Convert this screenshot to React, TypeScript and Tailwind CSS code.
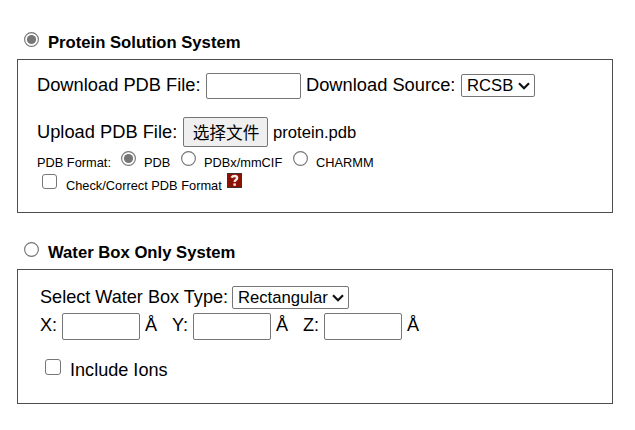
import type { ReactNode } from "react";

function Radio({ checked = false, className = "" }: { checked?: boolean; className?: string }) {
  return (
    <svg viewBox="0 0 15 15" className={`h-[15px] w-[15px] shrink-0 ${className}`}>
      <circle cx="7.5" cy="7.5" r="6.9" fill="white" stroke="#767676" strokeWidth="1.15" />
      {checked && <circle cx="7.5" cy="7.5" r="4.6" fill="#767676" />}
    </svg>
  );
}

function Text({ children, className = "" }: { children: ReactNode; className?: string }) {
  return <span className={`block shrink-0 leading-5 whitespace-nowrap ${className}`}>{children}</span>;
}

function Select({ value, className = "" }: { value: string; className?: string }) {
  return (
    <div className={`flex h-[23px] shrink-0 justify-between rounded-[2px] border border-[#767676] bg-white pr-[4px] pl-[5px] ${className}`}>
      <span className="text-[16.67px] leading-[21px]">{value}</span>
      <svg viewBox="0 0 12 8" className="mt-[7px] h-2 w-3" fill="none" stroke="#111" strokeWidth="2.2">
        <path d="M1 1.2 6 6.2 11 1.2" />
      </svg>
    </div>
  );
}

const field = "shrink-0 rounded-[2px] border border-[#767676] bg-white outline-none";

export default function App() {
  return (
    <main className="h-[430px] w-[635px] overflow-hidden bg-white pt-[32px] pl-[17px] font-['Liberation_Sans','Noto_Sans_CJK_SC',sans-serif] text-[18.1px] text-black">
      <div className="flex h-[27px] items-start pl-[7px]">
        <Radio checked />
        <Text className="mt-[1px] ml-[9px] text-[16.67px] font-bold">Protein Solution System</Text>
      </div>
      <section className="h-[154px] w-[596px] border border-[#4d4d4d] pt-[13px] pl-[19px]">
        <div className="flex h-[44px] items-start">
          <Text className="mt-[2px] w-[169px] text-[18.3px]">Download PDB File:</Text>
          <input className={`h-[26px] w-[95px] ${field}`} />
          <Text className="mt-[2px] ml-[5px] w-[155px] text-[18.3px]">Download Source:</Text>
          <Select value="RCSB" className="mt-[1px] w-[74px]" />
        </div>
        <div className="flex h-[34px] items-start">
          <Text className="mt-[5px] w-[146px] text-[18.3px]">Upload PDB File:</Text>
          <button className="h-[30px] w-[85px] shrink-0 rounded-[2px] border border-[#767676] bg-[#efefef] pt-[2px] pl-[1px] text-[16.67px] leading-[27px] whitespace-nowrap">选择文件</button>
          <Text className="mt-[6px] ml-[5px] text-[16.67px]">protein.pdb</Text>
        </div>
        <div className="flex h-[22px] items-start text-[12.8px]">
          <Text className="mt-[2px] w-[84px]">PDB Format:</Text>
          <Radio checked />
          <Text className="mt-[2px] ml-[8px] w-[37px]">PDB</Text>
          <Radio />
          <Text className="mt-[2px] ml-[8px] w-[89px]">PDBx/mmCIF</Text>
          <Radio />
          <Text className="mt-[2px] ml-[8px]">CHARMM</Text>
        </div>
        <div className="flex items-start pl-[5px] text-[12.8px]">
          <span className="mt-[1px] h-[15px] w-[15px] shrink-0 rounded-[3px] border border-[#767676]" />
          <Text className="mt-[3px] ml-[9px] w-[161px]">Check/Correct PDB Format</Text>
          <svg viewBox="0 0 15 15" className="h-[15px] w-[15px]">
            <rect x=".5" y=".5" width="14" height="14" fill="#8b1200" stroke="#3c3030" />
            <path d="M4.4 4.6C5.2 3.5 6.2 3 7.5 3c1.7 0 2.7.8 2.7 2 0 1.8-2.6 1.8-2.6 4" fill="none" stroke="#f4e8e6" strokeWidth="2.3" />
            <rect x="6.4" y="10.4" width="2.5" height="2.4" fill="#f4e8e6" />
          </svg>
        </div>
      </section>

      <div className="mt-[29px] flex h-[27px] items-start pl-[7px]">
        <Radio />
        <Text className="mt-[1px] ml-[9px] text-[16.67px] font-bold">Water Box Only System</Text>
      </div>
      <section className="h-[135px] w-[596px] border border-[#4d4d4d] pt-[16px] pl-[22px]">
        <div className="flex h-[27px] items-start">
          <Text className="mt-[1px] w-[192px]">Select Water Box Type:</Text>
          <Select value="Rectangular" className="w-[117px]" />
        </div>
        <div className="flex h-[46px] items-start">
          <Text className="mt-[2px] w-[22px]">X:</Text>
          <input className={`h-[27px] w-[78px] ${field}`} />
          <Text className="mt-[2px] ml-[5px] w-[27px]">Å</Text>
          <Text className="mt-[2px] w-[21px]">Y:</Text>
          <input className={`h-[27px] w-[78px] ${field}`} />
          <Text className="mt-[2px] ml-[5px] w-[27px]">Å</Text>
          <Text className="mt-[2px] w-[21px]">Z:</Text>
          <input className={`h-[27px] w-[78px] ${field}`} />
          <Text className="mt-[2px] ml-[5px]">Å</Text>
        </div>
        <div className="flex items-start pl-[5px]">
          <span className="h-[16px] w-[16px] shrink-0 rounded-[3px] border border-[#767676]" />
          <Text className="mt-[1px] ml-[9px]">Include Ions</Text>
        </div>
      </section>
    </main>
  );
}
